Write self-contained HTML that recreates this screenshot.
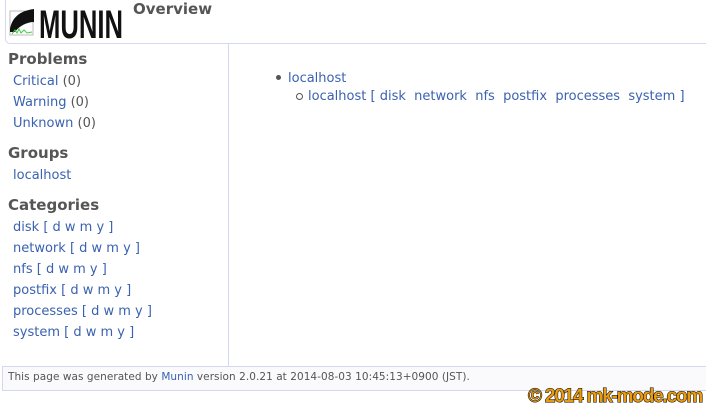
<!DOCTYPE html>
<html><head><meta charset="utf-8"><style>
body{margin:0;width:706px;height:411px;background:#fff;font-family:"DejaVu Sans",sans-serif;font-size:13px;color:#555;position:relative;overflow:hidden}
a{color:#3a62b0;text-decoration:none}
.a{position:absolute;white-space:nowrap}
.h{font-weight:bold;font-size:15px;color:#555}
</style></head><body>
<div class="a" style="left:5px;top:-1px;width:710px;height:44px;border:1px solid #d4d8ee;border-radius:0 0 0 5px;border-top:none;background:#fff"></div>
<svg class="a" style="left:9px;top:5px" width="118" height="34">
<rect x="1" y="6" width="23" height="24" fill="#fff" stroke="#bbb"/>
<path d="M1 24 C3 13 10 6 25 4 L25 17 C18 17 10 21 6 27 L1 27Z" fill="#111"/>
<path d="M3 29 L6 25 L8 28 L10 24 L12 28 L15 25 L18 28 L23 27" stroke="#4c4" fill="none" stroke-width="1"/>
<text x="30" y="33" font-family="Liberation Sans Narrow,Liberation Sans,sans-serif" font-weight="bold" font-size="40" fill="#111" textLength="84" lengthAdjust="spacingAndGlyphs">MUNIN</text>
</svg>
<div class="a h" style="left:133px;top:0px">Overview</div>
<div class="a" style="left:228px;top:44px;width:1px;height:322px;background:#d4d8ee"></div>
<div class="a h" style="left:8px;top:50px">Problems</div>
<div class="a" style="left:13px;top:74px"><a>Critical</a> (0)</div>
<div class="a" style="left:13px;top:95px"><a>Warning</a> (0)</div>
<div class="a" style="left:13px;top:116px"><a>Unknown</a> (0)</div>
<div class="a h" style="left:8px;top:144px">Groups</div>
<div class="a" style="left:13px;top:168px"><a>localhost</a></div>
<div class="a h" style="left:8px;top:196px">Categories</div>
<div class="a" style="left:13px;top:220px"><a>disk</a> <a>[ d w m y ]</a></div>
<div class="a" style="left:13px;top:241px"><a>network</a> <a>[ d w m y ]</a></div>
<div class="a" style="left:13px;top:262px"><a>nfs</a> <a>[ d w m y ]</a></div>
<div class="a" style="left:13px;top:283px"><a>postfix</a> <a>[ d w m y ]</a></div>
<div class="a" style="left:13px;top:304px"><a>processes</a> <a>[ d w m y ]</a></div>
<div class="a" style="left:13px;top:325px"><a>system</a> <a>[ d w m y ]</a></div>
<div class="a" style="left:276px;top:75px;width:5px;height:5px;border-radius:50%;background:#555"></div>
<div class="a" style="left:288px;top:71px"><a>localhost</a></div>
<div class="a" style="left:296px;top:93px;width:5px;height:5px;border-radius:50%;border:1px solid #555"></div>
<div class="a" style="left:308px;top:89px"><a>localhost</a> <a>[</a> <a>disk</a>&nbsp; <a>network</a>&nbsp; <a>nfs</a>&nbsp; <a>postfix</a>&nbsp; <a>processes</a>&nbsp; <a>system</a> <a>]</a></div>
<div class="a" style="left:2px;top:366px;width:710px;height:23px;border:1px solid #d4d8ee;background:#fafafd"></div>
<div class="a" style="left:8px;top:371px;font-size:10.5px;letter-spacing:0.05px;font-family:'DejaVu Sans',sans-serif;color:#555">This page was generated by <a>Munin</a> version 2.0.21 at 2014-08-03 10:45:13+0900 (JST).</div>
<div class="a" style="left:528px;top:386px;font-family:'Liberation Sans Narrow','Liberation Sans',sans-serif;font-weight:bold;font-size:19px;color:#e89a10;letter-spacing:-1.2px;-webkit-text-stroke:1px #000;paint-order:stroke fill">© 2014 mk-mode.com</div>
</body></html>
